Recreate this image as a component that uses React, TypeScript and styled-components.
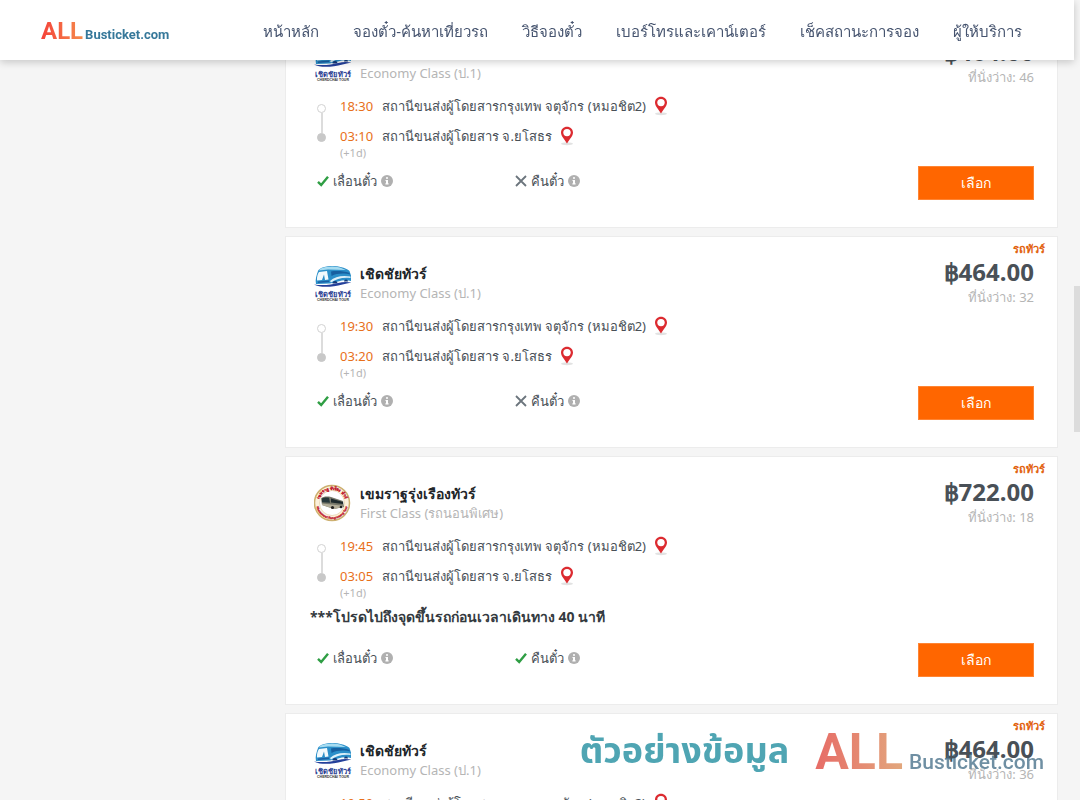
import React from "react";
import styled, { createGlobalStyle } from "styled-components";

const GlobalStyle = createGlobalStyle`
  * { box-sizing: border-box; }
  html, body { margin: 0; height: 100%; overflow: hidden; background: #f5f5f5; }
  body { font-family: "Noto Sans", "Open Sans", sans-serif; font-size: 13px; color: #495057; }
  #root { height: 100%; }
`;

const Page = styled.div`
  display: flex;
  height: 100%;
  overflow: hidden;
`;

const Content = styled.div`
  flex: 1;
  min-width: 0;
`;

const Header = styled.header`
  position: sticky;
  top: 0;
  z-index: 2;
  display: flex;
  align-items: center;
  justify-content: space-between;
  height: 60px;
  padding: 2px 52px 0 41px;
  background: #fff;
  box-shadow: 0 2px 8px rgba(0, 0, 0, 0.2);
`;

const Brand = styled.a<{ $large?: boolean }>`
  display: flex;
  align-items: baseline;
  gap: ${(p) => (p.$large ? 6 : 2)}px;
  font-family: Roboto, sans-serif;
  text-decoration: none;
  line-height: 1;
  opacity: ${(p) => (p.$large ? 0.75 : 1)};
`;

const BrandAll = styled.span<{ $large?: boolean }>`
  font-size: ${(p) => (p.$large ? 50 : 24)}px;
  font-weight: 700;
  color: transparent;
  background: linear-gradient(90deg, ${(p) => (p.$large ? "#df3b34, #d98a52" : "#f4433a, #f58a4b")});
  background-clip: text;
`;

const BrandName = styled.span<{ $large?: boolean }>`
  font-size: ${(p) => (p.$large ? 21 : 13)}px;
  font-weight: ${(p) => (p.$large ? 500 : 700)};
  color: ${(p) => (p.$large ? "#3f6a84" : "#36789a")};
`;

const Nav = styled.nav`
  display: flex;
  gap: 34px;
`;

const NavLink = styled.a`
  font-size: 15px;
  line-height: 24px;
  color: #46546f;
  text-decoration: none;
  white-space: nowrap;
`;

const Main = styled.main`
  display: flex;
  flex-direction: column;
  gap: 8px;
  margin-top: -44px;
  margin-left: 285px;
  margin-right: 16px;
`;

const Card = styled.article`
  position: relative;
  display: flex;
  justify-content: space-between;
  padding: 20px 23px 27px 28px;
  background: #fff;
  border: 1px solid #ececec;
`;

const Badge = styled.span`
  position: absolute;
  top: 4px;
  right: 12px;
  font-size: 11px;
  font-weight: 700;
  line-height: 16px;
  color: #e2620f;
`;

const Details = styled.div`
  padding: 7px 0 9px;
`;

const Operator = styled.div`
  display: flex;
  align-items: center;
  gap: 8px;
  height: 38px;
`;

const OperatorName = styled.h2`
  margin: 0;
  font-size: 14px;
  font-weight: 700;
  line-height: 20px;
  color: #212529;
`;

const ServiceClass = styled.p`
  margin: 0;
  line-height: 18px;
  color: #b5b5b5;
`;

const Route = styled.div`
  display: flex;
  gap: 14px;
  height: 74px;
  margin-top: 9px;
  padding-left: 3px;
`;

const Track = styled.div`
  display: flex;
  flex-direction: column;
  align-items: center;
  height: 38px;
  margin-top: 13px;
`;

const Dot = styled.span<{ $filled?: boolean }>`
  width: 9px;
  height: 9px;
  border: 1px solid ${(p) => (p.$filled ? "#c8c8c8" : "#d2d2d2")};
  border-radius: 50%;
  background: ${(p) => (p.$filled ? "#c8c8c8" : "#fff")};
`;

const Line = styled.span`
  flex: 1;
  width: 2px;
  background: #dcdcdc;
`;

const Stop = styled.div`
  display: flex;
  align-items: center;
  height: 30px;
`;

const Time = styled.time`
  width: 42px;
  color: #e8701a;
`;

const Place = styled.span`
  margin-right: 8px;
  white-space: nowrap;
`;

const NextDay = styled.p`
  margin: -5px 0 0;
  font-size: 11px;
  line-height: 14px;
  color: #b5b5b5;
`;

const Note = styled.p`
  margin: 2px 0 0 -4px;
  padding-bottom: 15px;
  font-size: 14px;
  font-weight: 700;
  line-height: 20px;
  color: #343a40;
`;

const Features = styled.ul`
  display: flex;
  margin: 6px 0 0;
  padding: 0 0 0 3px;
  list-style: none;
`;

const Feature = styled.li`
  display: flex;
  align-items: center;
  gap: 4px;
  width: 198px;
  line-height: 20px;
`;

const Booking = styled.div`
  display: flex;
  flex-direction: column;
  align-items: flex-end;
`;

const Price = styled.strong`
  font-size: 24px;
  font-weight: 700;
  line-height: 30px;
  color: #495057;
`;

const Seats = styled.span`
  line-height: 20px;
  color: #b5b5b5;
`;

const SelectButton = styled.button`
  width: 116px;
  height: 34px;
  margin-top: auto;
  padding: 0;
  border: 1px solid #ff8534;
  background: #ff6600;
  font-family: inherit;
  font-size: 14px;
  font-weight: 500;
  color: #fff;
`;

const Rail = styled.div`
  width: 6px;
  padding-top: 286px;
  background: #f5f5f5;
`;

const Thumb = styled.div`
  height: 146px;
  background: #dcdcdc;
`;

const Watermark = styled.aside`
  position: fixed;
  right: 36px;
  bottom: 23px;
  z-index: 1;
  display: flex;
  align-items: center;
  gap: 26px;
  pointer-events: none;
`;

const WatermarkText = styled.span`
  font-family: "Noto Sans Thai", "Noto Sans", sans-serif;
  font-size: 36px;
  font-weight: 700;
  line-height: 48px;
  color: #4fa5b3;
`;

const PinIcon = () => (
  <svg width="14" height="20" viewBox="0 0 14 20" aria-hidden="true">
    <ellipse cx="7" cy="17.800" rx="6" ry="1.500" fill="#e2e2e2" />
    <path d="M7 .8C3.600.8 1 3.400 1 6.600c0 3.700 3.500 6.500 6 11 2.500-4.500 6-7.300 6-11C13 3.400 10.400.8 7 .8z" fill="#dc2b30" />
    <circle cx="7" cy="6.600" r="3.700" fill="#fff" />
  </svg>
);

const CheckIcon = () => (
  <svg width="12" height="12" viewBox="0 0 12 12" aria-hidden="true">
    <path d="M1 6.800 4.200 10 11 1.800" fill="none" stroke="#2f9e44" strokeWidth="2.400" />
  </svg>
);

const CrossIcon = () => (
  <svg width="12" height="12" viewBox="0 0 12 12" aria-hidden="true">
    <path d="M1 1 11 11M11 1 1 11" fill="none" stroke="#6c757d" strokeWidth="1.800" />
  </svg>
);

const InfoIcon = () => (
  <svg width="12" height="12" viewBox="0 0 12 12" aria-hidden="true">
    <circle cx="6" cy="6" r="6" fill="#b0b0b0" />
    <path d="M5 2.300h2v1.500H5zM4.500 4.900H7v3.300h.6v1.200H4.400V8.200H5V6h-.5z" fill="#fff" />
  </svg>
);

const CherdchaiLogo = () => (
  <svg width="38" height="38" viewBox="0 0 38 38" role="img" aria-label="Cherdchai Tour">
    <path d="M4 7C5 3.500 14 1.500 21 2c6 .5 12 2.500 14.500 5l1.500 4.500V17c-8-2-13 1-21 2.500L2 20C1 16 2.500 11 4 7z" fill="#2b8fc9" />
    <path d="M6 4.800C12 2.300 20 2 26 3.500l6 2.500-18-.5-9 1z" fill="#a6dcf1" />
    <path d="M5 8 13 7l1.500 8.500-3.500.5-1-5.500L8 16l-5 .5C2.800 13 3.500 10 5 8z" fill="#f2fafd" />
    <path d="M17 7.500c5-1 13-.5 18.500 1.500l.5 1.500c-5-1.500-13-1.500-18.500 1.500z" fill="#1760a0" />
    <path d="M16 17c5-4.500 12-6 20.500-4.500V14c-8-1-14 1-19.500 4.500z" fill="#dff2fa" />
    <path d="M4 17.500l11-1V18l-11 1z" fill="#1b5fa3" />
    <path d="M18.500 19.500a2.500 2.500 0 0 1 5 0zM30 17.500a2 2 0 0 1 4 0z" fill="#143a77" />
    <path d="M0 20.500c8 1.300 18 .3 24-1.500 5-1.300 9-1.300 13.500-.5C31 19.500 26 21.500 20 22.300 12 23.300 4 23 0 20.500z" fill="#24409a" />
    <text x="19" y="33" textAnchor="middle" fontSize="7.500" fontWeight="700" fontFamily="Noto Sans, sans-serif" fill="#2b3f93">เชิดชัย ทัวร์</text>
    <text x="19" y="37" textAnchor="middle" fontSize="3.500" fontWeight="700" fontFamily="Liberation Sans, sans-serif" fill="#333">CHERDCHAI TOUR</text>
  </svg>
);

const KhemmaratLogo = () => (
  <svg width="38" height="38" viewBox="0 0 38 38" role="img" aria-label="Khemmarat Rungrueang Tour">
    <defs>
      <path id="badge-top" d="M4.500 19a13.500 13.500 0 0 1 27 0" />
      <path id="badge-bottom" d="M2 19a16 16 0 0 0 32 0" />
    </defs>
    <circle cx="18" cy="19" r="17.500" fill="#fbf1dc" stroke="#cdb070" strokeWidth="1.500" />
    <circle cx="18" cy="19" r="12.500" fill="#fff" stroke="#e0c89a" strokeWidth=".6" />
    <text fontSize="4" fontWeight="700" fontFamily="Noto Sans, sans-serif" fill="#c01c30" stroke="#c01c30" strokeWidth=".3">
      <textPath href="#badge-top" startOffset="50%" textAnchor="middle">เขมราฐ รุ่งเรือง ทัวร์</textPath>
    </text>
    <text fontSize="3" fontWeight="700" fontFamily="Liberation Sans, sans-serif" fill="#c01c30" stroke="#c01c30" strokeWidth=".3">
      <textPath href="#badge-bottom" startOffset="50%" textAnchor="middle">Khemmarat Rungrueang Tour</textPath>
    </text>
    <path d="M7 14.500c2-2 6-2.500 10-1.500l12 4 1 6-10 2L8 21z" fill="#77786a" />
    <path d="M8 14.500c2-1.200 5-1.300 7-.8l1 5-8-.5z" fill="#27383b" />
    <path d="M17 14.500l12 3.500v2l-12-1.500z" fill="#1e2a2d" />
    <path d="M8 19.500l21 2.200v1L20 25 8 21z" fill="#b3ae99" />
    <circle cx="18.500" cy="23.500" r="1.600" fill="#222" />
    <circle cx="27" cy="23" r="1.300" fill="#222" />
  </svg>
);

const navItems = [
  "หน้าหลัก",
  "จองตั๋ว-ค้นหาเที่ยวรถ",
  "วิธีจองตั๋ว",
  "เบอร์โทรและเคาน์เตอร์",
  "เช็คสถานะการจอง",
  "ผู้ให้บริการ",
];

interface Trip {
  operator: string;
  serviceClass: string;
  khemmarat?: boolean;
  departs: string;
  arrives: string;
  price: string;
  seats: number;
  note?: string;
  refundable?: boolean;
}

const cherdchai = { operator: "เชิดชัยทัวร์", serviceClass: "Economy Class (ป.1)", price: "฿464.00" };

const trips: Trip[] = [
  { ...cherdchai, departs: "18:30", arrives: "03:10", seats: 46 },
  { ...cherdchai, departs: "19:30", arrives: "03:20", seats: 32 },
  {
    operator: "เขมราฐรุ่งเรืองทัวร์",
    serviceClass: "First Class (รถนอนพิเศษ)",
    khemmarat: true,
    departs: "19:45",
    arrives: "03:05",
    price: "฿722.00",
    seats: 18,
    note: "***โปรดไปถึงจุดขึ้นรถก่อนเวลาเดินทาง 40 นาที",
    refundable: true,
  },
  { ...cherdchai, departs: "19:50", arrives: "03:40", seats: 36 },
];

const TripCard = ({ trip }: { trip: Trip }) => (
  <Card>
    <Badge>รถทัวร์</Badge>
    <Details>
      <Operator>
        {trip.khemmarat ? <KhemmaratLogo /> : <CherdchaiLogo />}
        <div>
          <OperatorName>{trip.operator}</OperatorName>
          <ServiceClass>{trip.serviceClass}</ServiceClass>
        </div>
      </Operator>
      <Route>
        <Track>
          <Dot />
          <Line />
          <Dot $filled />
        </Track>
        <div>
          <Stop>
            <Time>{trip.departs}</Time>
            <Place>สถานีขนส่งผู้โดยสารกรุงเทพ จตุจักร (หมอชิต2)</Place>
            <PinIcon />
          </Stop>
          <Stop>
            <Time>{trip.arrives}</Time>
            <Place>สถานีขนส่งผู้โดยสาร จ.ยโสธร</Place>
            <PinIcon />
          </Stop>
          <NextDay>(+1d)</NextDay>
        </div>
      </Route>
      {trip.note && <Note>{trip.note}</Note>}
      <Features>
        <Feature>
          <CheckIcon />
          เลื่อนตั๋ว
          <InfoIcon />
        </Feature>
        <Feature>
          {trip.refundable ? <CheckIcon /> : <CrossIcon />}
          คืนตั๋ว
          <InfoIcon />
        </Feature>
      </Features>
    </Details>
    <Booking>
      <Price>{trip.price}</Price>
      <Seats>ที่นั่งว่าง: {trip.seats}</Seats>
      <SelectButton type="button">เลือก</SelectButton>
    </Booking>
  </Card>
);

export default function App() {
  return (
    <Page>
      <GlobalStyle />
      <Content>
        <Header>
          <Brand href="#">
            <BrandAll>ALL</BrandAll>
            <BrandName>Busticket.com</BrandName>
          </Brand>
          <Nav>
            {navItems.map((item) => (
              <NavLink href="#" key={item}>
                {item}
              </NavLink>
            ))}
          </Nav>
        </Header>
        <Main>
          {trips.map((trip) => (
            <TripCard key={trip.departs} trip={trip} />
          ))}
        </Main>
      </Content>
      <Rail>
        <Thumb />
      </Rail>
      <Watermark>
        <WatermarkText>ตัวอย่างข้อมูล</WatermarkText>
        <Brand as="div" $large>
          <BrandAll $large>ALL</BrandAll>
          <BrandName $large>Busticket.com</BrandName>
        </Brand>
      </Watermark>
    </Page>
  );
}
